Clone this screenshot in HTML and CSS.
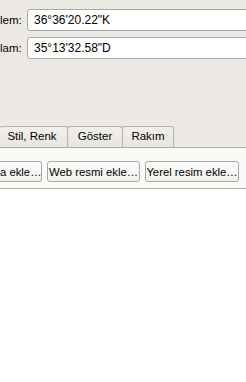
FILE: index.html
```html
<!DOCTYPE html>
<html>
<head>
    <title>Konum</title>
    <link rel="stylesheet" href="styles.css">
</head>
<body>
    <div class="coords">
        <div class="row">
            <label class="lbl" for="lat">lem:</label>
            <input class="field" type="text" id="lat" value="36°36'20.22&quot;K">
        </div>
        <div class="row">
            <label class="lbl" for="lon">lam:</label>
            <input class="field" type="text" id="lon" value="35°13'32.58&quot;D">
        </div>
    </div>
    <div class="tabs">
        <div class="tab first">Stil, Renk</div>
        <div class="tab show">Göster</div>
        <div class="tab alt">Rakım</div>
    </div>
    <div class="panel">
        <button class="btn first-btn">a ekle…</button>
        <button class="btn web">Web resmi ekle…</button>
        <button class="btn local">Yerel resim ekle…</button>
    </div>
    <div class="rest"></div>
</body>
</html>
```

FILE: styles.css
```css
html, body {
    margin: 0;
    padding: 0;
    overflow: hidden;
}
body {
    width: 246px;
    height: 382px;
    background: #ece9e4;
    font-family: "Liberation Sans", Arial, sans-serif;
    font-size: 12px;
    color: #000;
}
.coords {
    padding-top: 9px;
    display: flex;
    flex-direction: column;
    gap: 6px;
}
.row {
    display: flex;
    align-items: center;
    gap: 6px;
    height: 22px;
    margin-right: -30px;
}
.lbl {
    width: 21px;
    text-align: right;
    white-space: nowrap;
    font-size: 11.5px;
}
.field {
    flex: 1;
    height: 22px;
    box-sizing: border-box;
    border: 1px solid #a8a8a4;
    border-radius: 3px;
    background: #fff;
    padding: 0 6px;
    font-family: inherit;
    font-size: 12px;
    color: #000;
}
.tabs {
    display: flex;
    margin-top: 67px;
    margin-left: -1px;
    height: 21px;
}
.tab {
    box-sizing: border-box;
    height: 21px;
    line-height: 19px;
    border: 1px solid #b6b3ac;
    border-bottom: none;
    border-radius: 3px 3px 0 0;
    background: linear-gradient(#f1efeb, #e9e6e0);
    margin-right: -1px;
    white-space: nowrap;
    text-align: center;
    font-size: 11.5px;
}
.tab.first {
    width: 69px;
    padding-right: 3px;
}
.tab.show {
    width: 56px;
}
.tab.alt {
    width: 52px;
}
.panel {
    display: flex;
    align-items: flex-start;
    gap: 5px;
    height: 42px;
    box-sizing: border-box;
    border-top: 1px solid #aeaba4;
    border-bottom: 1px solid #b4b1aa;
    background: #fbfaf8;
    padding-top: 13px;
}
.btn {
    height: 21px;
    box-sizing: border-box;
    border: 1px solid #a9a8a3;
    border-radius: 3px;
    background: linear-gradient(#fdfdfc, #f1f0ec);
    font-family: inherit;
    font-size: 11.3px;
    padding: 0;
    color: #000;
    white-space: nowrap;
}
.web {
    width: 93px;
}
.local {
    width: 94px;
}
.first-btn {
    width: 42px;
    border-left: none;
    border-radius: 0 3px 3px 0;
    padding: 0 3px 0 0;
    text-align: right;
}
.rest {
    background: #fff;
    height: 200px;
}
```
